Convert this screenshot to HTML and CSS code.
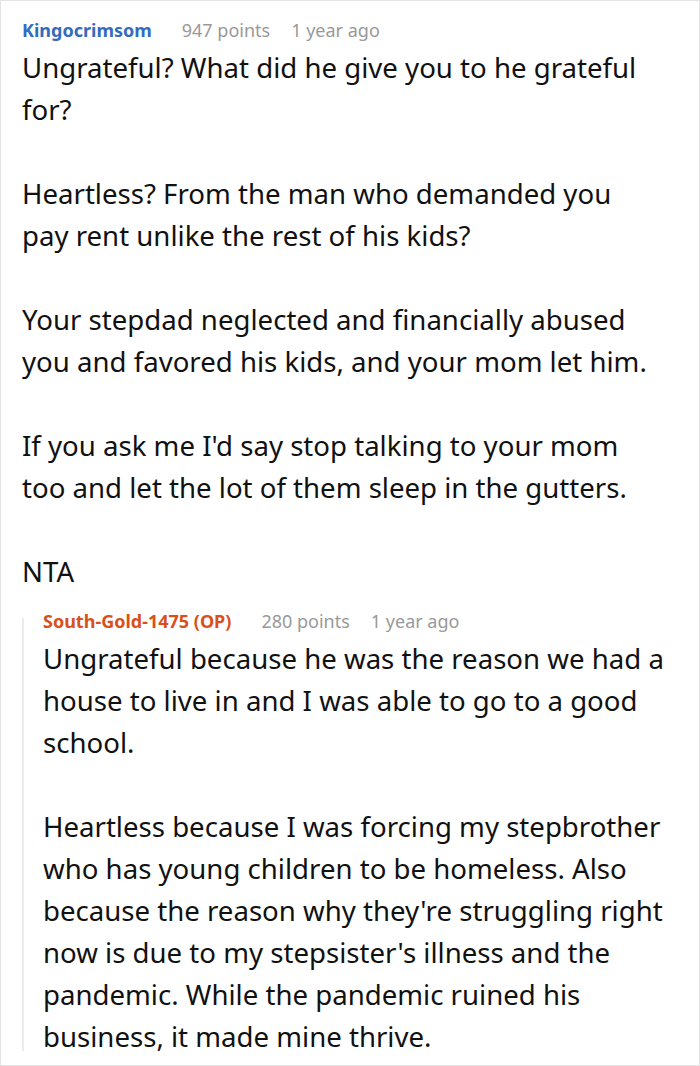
FILE: index.html
```html
<!DOCTYPE html>
<html lang="en">
<head>
<meta charset="utf-8">
<title>Comment</title>
<link rel="stylesheet" href="styles.css">
</head>
<body>
<div class="card">
  <div class="body">
    <div class="meta">
      <span class="author">Kingocrimsom</span>
      <span class="info">947 points</span>
      <span class="info">1 year ago</span>
    </div>
    <div class="text main-text">
      <p>Ungrateful? What did he give you to he grateful for?</p>
      <p>Heartless? From the man who demanded you pay rent unlike the rest of his kids?</p>
      <p>Your stepdad neglected and financially abused you and favored his kids, and your mom let him.</p>
      <p>If you ask me I'd say stop talking to your mom too and let the lot of them sleep in the gutters.</p>
      <p>NTA</p>
    </div>
    <div class="reply">
      <div class="thread-line"></div>
      <div class="reply-content">
        <div class="meta">
          <span class="author op">South-Gold-1475 (OP)</span>
          <span class="info">280 points</span>
          <span class="info">1 year ago</span>
        </div>
        <div class="text">
          <p>Ungrateful because he was the reason we had a house to live in and I was able to go to a good school.</p>
          <p>Heartless because I was forcing my stepbrother who has young children to be homeless. Also because the reason why they're struggling right now is due to my stepsister's illness and the pandemic. While the pandemic ruined his business, it made mine thrive.</p>
        </div>
      </div>
    </div>
  </div>
</div>
</body>
</html>
```
FILE: styles.css
```css
html, body {
  margin: 0;
  padding: 0;
  background: #ffffff;
}
.card {
  box-sizing: border-box;
  width: 700px;
  height: 1066px;
  border: 1px solid #e4e4e4;
  padding: 0 0 14px 21px;
  display: flex;
  flex-direction: column;
  font-family: "Noto Sans", "Open Sans", sans-serif;
  color: #111111;
}
.body {
  flex: 1;
  overflow: hidden;
  min-height: 0;
}
.meta {
  display: flex;
  gap: 21px;
  font-size: 18px;
  line-height: 30px;
  height: 30px;
  padding-top: 14px;
  margin-bottom: 1px;
}
.author {
  color: #336bbf;
  font-weight: 700;
  margin-right: 9px;
}
.author.op {
  color: #d9501b;
}
.info {
  color: #999999;
}
.text {
  font-size: 27.6px;
  line-height: 42px;
  padding-right: 1px;
}
.main-text {
  padding-right: 40px;
}
.text p {
  margin: 0 0 42px 0;
}
.text p:last-child {
  margin-bottom: 0;
}
.reply {
  display: flex;
  margin-top: 0;
}
.thread-line {
  flex: 0 0 2px;
  background: #ebebeb;
  margin-top: 26px;
  margin-right: 19px;
  margin-bottom: 3px;
}
.reply-content {
  flex: 1;
  min-width: 0;
}
```
